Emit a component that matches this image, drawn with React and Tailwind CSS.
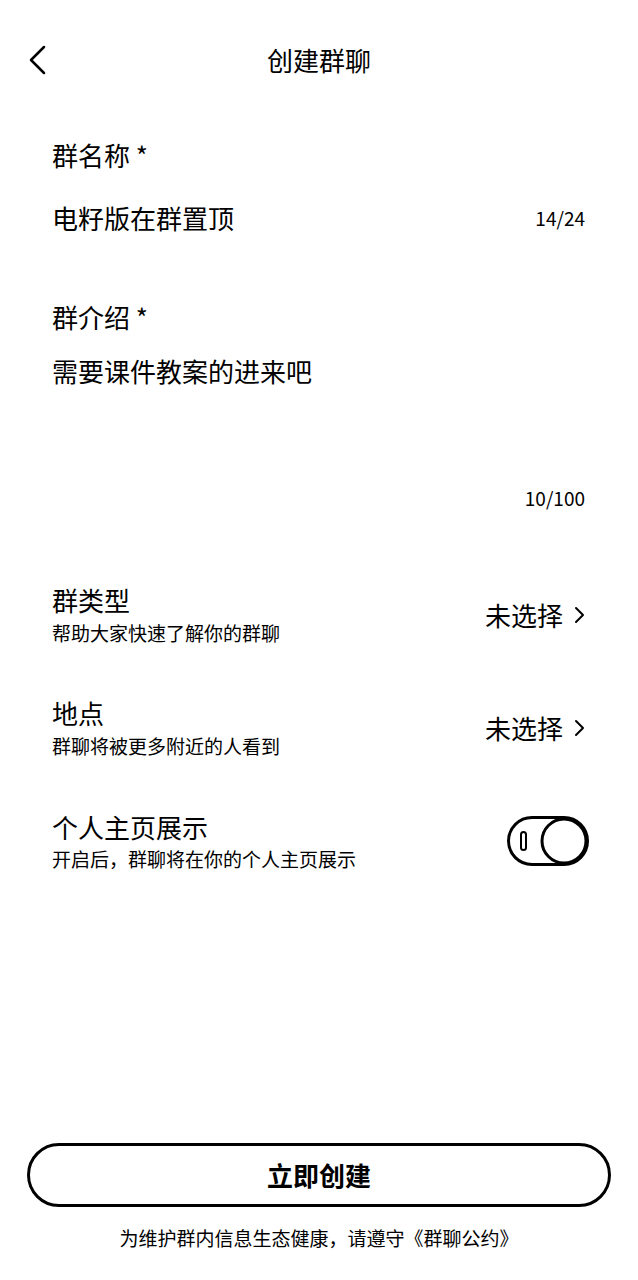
const font = { fontFamily: '"Noto Sans CJK SC", "Noto Sans", sans-serif' };

const Chevron = () => (
  <svg width="12" height="20" viewBox="0 0 12 20" fill="none">
    <path d="M3 3l7 7-7 7" stroke="#000" strokeWidth="2" strokeLinecap="round" strokeLinejoin="round" />
  </svg>
);

const Toggle = () => (
  <svg width="82" height="50" viewBox="0 0 82 50" fill="none">
    <rect x="1.5" y="1.5" width="79" height="47" rx="23.5" fill="#fff" stroke="#000" strokeWidth="3" />
    <circle cx="57" cy="25" r="22" fill="#fff" stroke="#000" strokeWidth="3" />
    <rect x="14" y="16" width="5" height="18" rx="2.5" stroke="#000" strokeWidth="2" />
  </svg>
);

const SelectRow = ({ title, desc }) => (
  <div className="flex items-center justify-between">
    <div className="flex flex-col gap-[5px]">
      <span className="text-[26px] leading-[32px] text-black">{title}</span>
      <span className="text-[19px] leading-[24px] text-black">{desc}</span>
    </div>
    <div className="flex items-center gap-[10px] pr-[1px]">
      <span className="text-[26px] leading-[32px] text-black">未选择</span>
      <Chevron />
    </div>
  </div>
);

export default function App() {
  return (
    <div className="min-h-[1280px] bg-white flex flex-col" style={font}>
      <div className="h-[120px] grid grid-cols-[1fr_auto_1fr] items-center">
        <div className="pl-[28px] flex items-center">
          <svg width="20" height="30" viewBox="0 0 20 30" fill="none">
            <path d="M16 2L3 15l13 13" stroke="#000" strokeWidth="2.5" strokeLinecap="round" strokeLinejoin="round" />
          </svg>
        </div>
        <span className="text-[26px] leading-[32px] text-black">创建群聊</span>
        <div />
      </div>

      <div className="px-[52px] flex flex-col">
        <span className="mt-[19px] text-[26px] leading-[32px] text-black">群名称 *</span>
        <div className="mt-[31px] flex items-center justify-between">
          <span className="text-[26px] leading-[32px] text-black">电籽版在群置顶</span>
          <span className="text-[19px] leading-[24px] text-black pr-[1px]">14/24</span>
        </div>

        <span className="mt-[67px] text-[26px] leading-[32px] text-black">群介绍 *</span>
        <span className="mt-[22px] text-[26px] leading-[32px] text-black">需要课件教案的进来吧</span>
        <span className="mt-[99px] self-end text-[19px] leading-[24px] text-black pr-[1px]">10/100</span>

        <div className="mt-[74px]">
          <SelectRow title="群类型" desc="帮助大家快速了解你的群聊" />
        </div>
        <div className="mt-[52px]">
          <SelectRow title="地点" desc="群聊将被更多附近的人看到" />
        </div>

        <div className="mt-[53px] flex items-center justify-between">
          <div className="flex flex-col gap-[4px]">
            <span className="text-[26px] leading-[32px] text-black">个人主页展示</span>
            <span className="text-[19px] leading-[24px] text-black">开启后，群聊将在你的个人主页展示</span>
          </div>
          <div className="mr-[-3px]">
            <Toggle />
          </div>
        </div>
      </div>

      <div className="flex-1" />

      <div className="mx-[27px] h-[64px] rounded-full border-[3px] border-black flex items-center justify-center">
        <span className="text-[26px] leading-[32px] font-bold text-black">立即创建</span>
      </div>
      <p className="mt-[19px] mb-[30px] text-center text-[19px] leading-[24px] text-black">
        为维护群内信息生态健康，请遵守《群聊公约》
      </p>
    </div>
  );
}
